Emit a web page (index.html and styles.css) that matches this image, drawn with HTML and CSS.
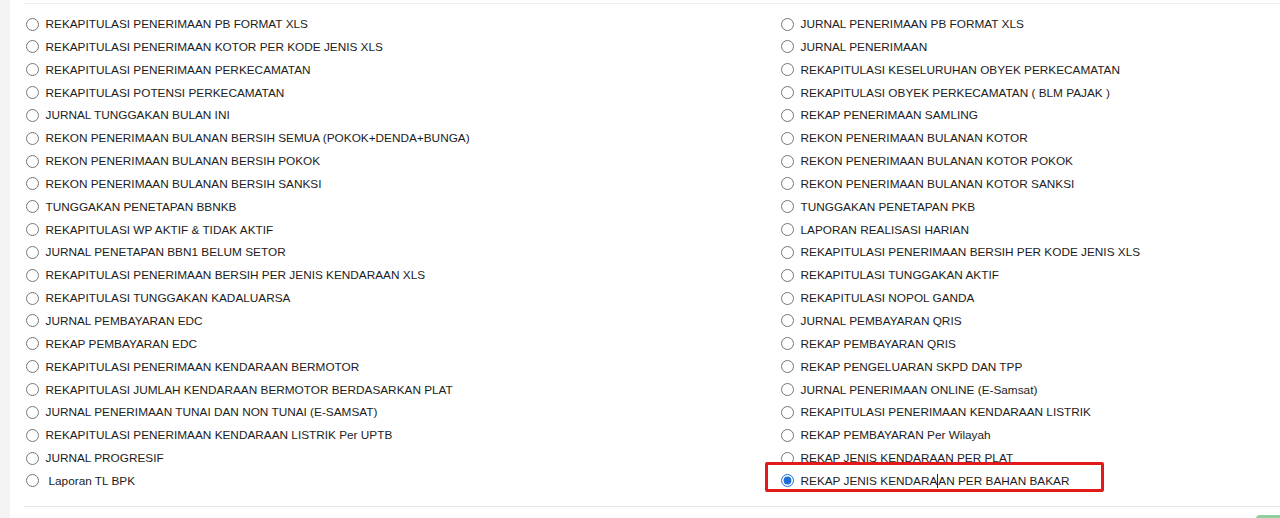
FILE: index.html
```html
<!DOCTYPE html>
<html>
<head>
<meta charset="utf-8">
<link rel="stylesheet" href="styles.css">
</head>
<body>
<div class="page">
  <div class="panel">
    <div class="options">
      <div class="col">
        <label class="opt"><input type="radio" name="lap"><span>REKAPITULASI PENERIMAAN PB FORMAT XLS</span></label>
        <label class="opt"><input type="radio" name="lap"><span>REKAPITULASI PENERIMAAN KOTOR PER KODE JENIS XLS</span></label>
        <label class="opt"><input type="radio" name="lap"><span>REKAPITULASI PENERIMAAN PERKECAMATAN</span></label>
        <label class="opt"><input type="radio" name="lap"><span>REKAPITULASI POTENSI PERKECAMATAN</span></label>
        <label class="opt"><input type="radio" name="lap"><span>JURNAL TUNGGAKAN BULAN INI</span></label>
        <label class="opt"><input type="radio" name="lap"><span>REKON PENERIMAAN BULANAN BERSIH SEMUA (POKOK+DENDA+BUNGA)</span></label>
        <label class="opt"><input type="radio" name="lap"><span>REKON PENERIMAAN BULANAN BERSIH POKOK</span></label>
        <label class="opt"><input type="radio" name="lap"><span>REKON PENERIMAAN BULANAN BERSIH SANKSI</span></label>
        <label class="opt"><input type="radio" name="lap"><span>TUNGGAKAN PENETAPAN BBNKB</span></label>
        <label class="opt"><input type="radio" name="lap"><span>REKAPITULASI WP AKTIF &amp; TIDAK AKTIF</span></label>
        <label class="opt"><input type="radio" name="lap"><span>JURNAL PENETAPAN BBN1 BELUM SETOR</span></label>
        <label class="opt"><input type="radio" name="lap"><span>REKAPITULASI PENERIMAAN BERSIH PER JENIS KENDARAAN XLS</span></label>
        <label class="opt"><input type="radio" name="lap"><span>REKAPITULASI TUNGGAKAN KADALUARSA</span></label>
        <label class="opt"><input type="radio" name="lap"><span>JURNAL PEMBAYARAN EDC</span></label>
        <label class="opt"><input type="radio" name="lap"><span>REKAP PEMBAYARAN EDC</span></label>
        <label class="opt"><input type="radio" name="lap"><span>REKAPITULASI PENERIMAAN KENDARAAN BERMOTOR</span></label>
        <label class="opt"><input type="radio" name="lap"><span>REKAPITULASI JUMLAH KENDARAAN BERMOTOR BERDASARKAN PLAT</span></label>
        <label class="opt"><input type="radio" name="lap"><span>JURNAL PENERIMAAN TUNAI DAN NON TUNAI (E-SAMSAT)</span></label>
        <label class="opt"><input type="radio" name="lap"><span>REKAPITULASI PENERIMAAN KENDARAAN LISTRIK Per UPTB</span></label>
        <label class="opt"><input type="radio" name="lap"><span>JURNAL PROGRESIF</span></label>
        <label class="opt"><input type="radio" name="lap"><span class="indent">Laporan TL BPK</span></label>
      </div>
      <div class="col">
        <label class="opt"><input type="radio" name="lap"><span>JURNAL PENERIMAAN PB FORMAT XLS</span></label>
        <label class="opt"><input type="radio" name="lap"><span>JURNAL PENERIMAAN</span></label>
        <label class="opt"><input type="radio" name="lap"><span>REKAPITULASI KESELURUHAN OBYEK PERKECAMATAN</span></label>
        <label class="opt"><input type="radio" name="lap"><span>REKAPITULASI OBYEK PERKECAMATAN ( BLM PAJAK )</span></label>
        <label class="opt"><input type="radio" name="lap"><span>REKAP PENERIMAAN SAMLING</span></label>
        <label class="opt"><input type="radio" name="lap"><span>REKON PENERIMAAN BULANAN KOTOR</span></label>
        <label class="opt"><input type="radio" name="lap"><span>REKON PENERIMAAN BULANAN KOTOR POKOK</span></label>
        <label class="opt"><input type="radio" name="lap"><span>REKON PENERIMAAN BULANAN KOTOR SANKSI</span></label>
        <label class="opt"><input type="radio" name="lap"><span>TUNGGAKAN PENETAPAN PKB</span></label>
        <label class="opt"><input type="radio" name="lap"><span>LAPORAN REALISASI HARIAN</span></label>
        <label class="opt"><input type="radio" name="lap"><span>REKAPITULASI PENERIMAAN BERSIH PER KODE JENIS XLS</span></label>
        <label class="opt"><input type="radio" name="lap"><span>REKAPITULASI TUNGGAKAN AKTIF</span></label>
        <label class="opt"><input type="radio" name="lap"><span>REKAPITULASI NOPOL GANDA</span></label>
        <label class="opt"><input type="radio" name="lap"><span>JURNAL PEMBAYARAN QRIS</span></label>
        <label class="opt"><input type="radio" name="lap"><span>REKAP PEMBAYARAN QRIS</span></label>
        <label class="opt"><input type="radio" name="lap"><span>REKAP PENGELUARAN SKPD DAN TPP</span></label>
        <label class="opt"><input type="radio" name="lap"><span>JURNAL PENERIMAAN ONLINE (E-Samsat)</span></label>
        <label class="opt"><input type="radio" name="lap"><span>REKAPITULASI PENERIMAAN KENDARAAN LISTRIK</span></label>
        <label class="opt"><input type="radio" name="lap"><span>REKAP PEMBAYARAN Per Wilayah</span></label>
        <label class="opt"><input type="radio" name="lap"><span>REKAP JENIS KENDARAAN PER PLAT</span></label>
        <label class="opt selected"><input type="radio" name="lap" checked><span>REKAP JENIS KENDARA<i class="caret"></i>AN PER BAHAN BAKAR</span><b class="highlight"></b></label>
      </div>
    </div>
    <div class="footer">
      <button class="btn" aria-label="Proses"></button>
    </div>
  </div>
</div>
</body>
</html>
```
FILE: styles.css
```css
html, body {
  margin: 0;
  padding: 0;
  background: #f4f4f4;
  overflow: hidden;
}
.page {
  margin-left: 10px;
  background: #fff;
  min-height: 600px;
  padding-top: 3px;
}
.panel {
  margin-left: 14px;
  border-top: 1px solid #eeeeee;
}
.options {
  display: grid;
  grid-template-columns: 755px 1fr;
  padding-top: 8.6px;
  padding-bottom: 14px;
  border-bottom: 1px solid #e6e6e6;
}
.col {
  display: flex;
  flex-direction: column;
}
.opt {
  position: relative;
  display: flex;
  align-items: center;
  height: 22.85px;
  font-family: "Liberation Sans", Arial, sans-serif;
  font-size: 11.8px;
  color: #1c1c1c;
  cursor: pointer;
}
.opt input {
  width: 13px;
  height: 13px;
  margin: 0 7px 0 1.5px;
  flex: none;
  accent-color: #1a6fd8;
}
.opt .indent {
  padding-left: 3px;
}
.caret {
  display: inline-block;
  width: 1px;
  height: 14px;
  background: #222;
  vertical-align: -3px;
}
.highlight {
  position: absolute;
  left: -14px;
  top: -7.6px;
  width: 333px;
  height: 24px;
  border: 3px solid #e21a1a;
  border-radius: 2px;
}
.footer {
  display: flex;
  justify-content: flex-end;
  padding-top: 8px;
}
.btn {
  width: 28px;
  height: 30px;
  margin-right: -4px;
  background: #8fd19e;
  border: none;
  border-radius: 4px;
}
```
